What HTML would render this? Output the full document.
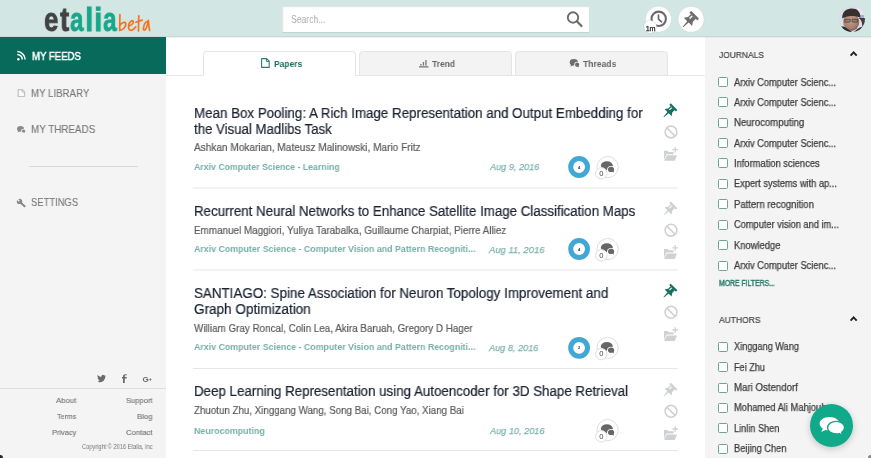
<!DOCTYPE html>
<html><head><meta charset="utf-8">
<style>
*{margin:0;padding:0;box-sizing:border-box}
html,body{width:871px;height:458px;overflow:hidden;background:#fff;font-family:"Liberation Sans",sans-serif}
.t{position:absolute;white-space:nowrap;transform-origin:0 0;will-change:transform}
.a{position:absolute}
.cb{position:absolute;left:718px;width:10px;height:10px;border:1.3px solid #6fa398;border-radius:1.5px;background:#fff}
</style></head><body>
<!-- header -->
<div class="a" style="left:0;top:0;width:871px;height:37px;background:#d2e6e3"></div>
<div class="a" style="left:0;top:36px;width:871px;height:1px;background:#c9d7d5"></div>
<!-- logo -->
<div class="t" style="left:43.97px;top:1.84px;font-size:34.0px;line-height:34.0px;font-weight:bold;color:#424242;-webkit-text-stroke:0.8px #424242;transform:scaleX(0.760)">e</div>
<div class="t" style="left:59.83px;top:1.84px;font-size:34.0px;line-height:34.0px;font-weight:bold;color:#424242;-webkit-text-stroke:0.8px #424242;transform:scaleX(0.806)">t</div>
<div class="t" style="left:70.47px;top:1.84px;font-size:34.0px;line-height:34.0px;font-weight:bold;color:#1aa68a;-webkit-text-stroke:0.8px #1aa68a;transform:scaleX(0.716)">a</div>
<div class="t" style="left:85.37px;top:1.84px;font-size:34.0px;line-height:34.0px;font-weight:bold;color:#1aa68a;-webkit-text-stroke:0.8px #1aa68a;transform:scaleX(0.893)">l</div>
<div class="t" style="left:93.97px;top:1.84px;font-size:34.0px;line-height:34.0px;font-weight:bold;color:#1aa68a;-webkit-text-stroke:0.8px #1aa68a;transform:scaleX(0.893)">i</div>
<div class="t" style="left:103.16px;top:1.84px;font-size:34.0px;line-height:34.0px;font-weight:bold;color:#1aa68a;-webkit-text-stroke:0.8px #1aa68a;transform:scaleX(0.721)">a</div>
<svg class="a" style="left:117px;top:12px" width="36" height="22" viewBox="0 0 36 22">
<g fill="none" stroke="#f57423" stroke-width="1.7" stroke-linecap="round" stroke-linejoin="round">
<path d="M2.9,2.6 C2.9,8 2.6,14 2.7,18.6 M2.9,13.6 C4.5,10.6 8.2,9.2 8.8,11.4 C9.4,13.8 6.4,18 2.8,18.5"/>
<path d="M11.7,14.2 C13.6,13.4 16.4,11.6 16.3,9.6 C16.1,8 13.4,8.6 12.1,11.6 C11,14 11.4,17.8 13.2,18.3 C15,18.8 17.4,16.6 18.8,14.8"/>
<path d="M21.8,3.8 C21.7,9 21.5,14 21.5,19 M18.9,10.2 C21,9.6 23.2,8.8 25.2,8.1"/>
<path d="M31,9 C28.6,9.6 26.8,13.2 26.4,16.4 C26.2,18 27.2,18.6 28.2,17.6 C29.8,15.8 30.8,12 31.4,8.4 C31.6,11.8 32,15.4 32.6,18.4"/>
</g>
</svg>
<!-- search -->
<div class="a" style="left:282px;top:6px;width:307px;height:26px;background:#fff;box-shadow:inset 1px 1px 1.5px rgba(0,0,0,0.13), 0 1px 0 rgba(0,0,0,0.07)"></div>
<!-- avatar -->
<svg class="a" style="left:839px;top:5.8px" width="26" height="26" viewBox="0 0 26 26">
<defs><clipPath id="av"><circle cx="13" cy="13" r="12.95"/></clipPath>
<radialGradient id="face" cx="0.45" cy="0.4" r="0.65"><stop offset="0" stop-color="#c8a090"/><stop offset="0.7" stop-color="#a47e70"/><stop offset="1" stop-color="#6e5048"/></radialGradient></defs>
<g clip-path="url(#av)">
<rect width="26" height="26" fill="#d8dde6"/>
<rect x="18" y="2" width="8" height="12" fill="#e9e4ec"/>
<rect x="20" y="9" width="5" height="4" fill="#9fb2d6"/>
<path d="M19,12 C22,13 24,17 23,22 L26,26 L26,12 Z" fill="#4a3a36"/>
<ellipse cx="12.2" cy="16" rx="8" ry="9" fill="url(#face)"/>
<path d="M0,26 L0,21 C2,19.5 5,20 8,22.5 C10,24 12,25 13,26 Z" fill="#2e2a2e"/>
<path d="M15,26 C17,24 19,22 22,21 L26,21 L26,26 Z" fill="#35302f"/>
<path d="M3.2,12.6 C3,6 7,2.6 12.6,2.6 C18.4,2.6 21.6,6 21.4,11.6 C18,10 14,9.6 10,10.2 C7.4,10.6 5,11.4 3.2,12.6 Z" fill="#37302f"/>
<path d="M5.6,13.4 L11.2,13.2 L11,16 L6,16.2 Z M13,13.2 L18.8,13.5 L18.4,16.1 L13.2,16 Z" fill="rgba(90,70,60,0.25)" stroke="#4e403c" stroke-width="0.8"/>
</g>
</svg>
<!-- left sidebar -->
<div class="a" style="left:0;top:37px;width:166px;height:421px;background:#f4f4f4"></div>
<div class="a" style="left:0;top:37px;width:166px;height:37px;background:#086a5b"></div>
<div class="a" style="left:29px;top:166px;width:109px;height:1px;background:#d8d8d8"></div>
<div class="a" style="left:0;top:388px;width:166px;height:1px;background:#dedede"></div>
<!-- right sidebar -->
<div class="a" style="left:705px;top:37px;width:166px;height:421px;background:#f4f4f4"></div>
<div class="a" style="left:166px;top:37px;width:705px;height:1px;background:rgba(0,0,0,0.05)"></div>
<div class="cb" style="top:77px"></div><div class="cb" style="top:97px"></div><div class="cb" style="top:118px"></div><div class="cb" style="top:138px"></div><div class="cb" style="top:158px"></div><div class="cb" style="top:179px"></div><div class="cb" style="top:199px"></div><div class="cb" style="top:220px"></div><div class="cb" style="top:240px"></div><div class="cb" style="top:260.6px"></div><div class="cb" style="top:341.90px"></div><div class="cb" style="top:362.28px"></div><div class="cb" style="top:382.66px"></div><div class="cb" style="top:403.04px"></div><div class="cb" style="top:423.42px"></div><div class="cb" style="top:443.80px"></div>
<!-- tabs -->
<div class="a" style="left:166px;top:75px;width:539px;height:1px;background:#e6e8ea"></div>
<div class="a" style="left:203px;top:51px;width:153px;height:25px;border:1px solid #e3e6e8;border-bottom:none;border-radius:4px 4px 0 0;background:#fff"></div>
<div class="a" style="left:359px;top:51px;width:153px;height:25px;border:1px solid #e3e6e8;border-radius:4px 4px 0 0;background:#f3f3f3"></div>
<div class="a" style="left:515px;top:51px;width:153px;height:25px;border:1px solid #e3e6e8;border-radius:4px 4px 0 0;background:#f3f3f3"></div>
<!-- dividers -->
<div class="a" style="left:193px;top:187px;width:485px;height:2px;background:#f2f3f4"></div>
<div class="a" style="left:193px;top:269px;width:485px;height:2px;background:#f2f3f4"></div>
<div class="a" style="left:193px;top:368px;width:485px;height:1px;background:#e6e7ea"></div>
<div class="a" style="left:193px;top:450px;width:485px;height:1px;background:#e6e7ea"></div>
<svg class="a" style="left:0;top:0" width="871" height="458" viewBox="0 0 871 458"><circle cx="573" cy="17.5" r="5.2" fill="none" stroke="#6b6b6b" stroke-width="1.9"/><line x1="576.8" y1="21.3" x2="581.5" y2="26" stroke="#6b6b6b" stroke-width="2.2" stroke-linecap="round"/><circle cx="658.5" cy="19.2" r="12.9" fill="#fff" stroke="rgba(0,0,0,0.07)" stroke-width="0.8"/><circle cx="658.7" cy="18.8" r="7.2" fill="none" stroke="#6a6a6a" stroke-width="2.1"/><path d="M658.5,15 L658.5,19.2 L661.5,21.9" fill="none" stroke="#6a6a6a" stroke-width="1.7" stroke-linecap="round"/><circle cx="650.2" cy="26.7" r="6.5" fill="#fff" stroke="rgba(0,0,0,0.10)" stroke-width="0.9"/><text x="650.5" y="30.6" font-family="Liberation Sans" font-size="7.2" fill="#222" stroke="#222" stroke-width="0.25" text-anchor="middle" letter-spacing="-0.3">1m</text><circle cx="691.1" cy="19.3" r="12.9" fill="#fff" stroke="rgba(0,0,0,0.07)" stroke-width="0.8"/><g transform="translate(688.95,20.85) rotate(45) scale(1.18)" fill="#6d6d6d"><rect x="-4.7" y="-7.3" width="9.4" height="2.1" rx="0.4"/><path d="M-2.9,-5.4 L2.9,-5.4 L2.9,-1.8 L5,1.2 L0.85,1.2 L0.3,7.3 L-0.3,7.3 L-0.85,1.2 L-5,1.2 L-2.9,-1.8 Z"/><rect x="-1.6" y="-4.9" width="1.2" height="3.2" fill="#fff"/></g><circle cx="18.3" cy="59.3" r="1.25" fill="#fff"/><path d="M17.3,54.4 A5,5 0 0 1 22.3,59.4" fill="none" stroke="#fff" stroke-width="1.5"/><path d="M17.3,51.6 A7.9,7.9 0 0 1 25.1,59.4" fill="none" stroke="#fff" stroke-width="1.5"/><path d="M18.2,89.6 L22.3,89.6 L24.5,91.8 L24.5,96.5 L18.2,96.5 Z" fill="#fafafa" stroke="#c2c2c2" stroke-width="1.2" stroke-linejoin="round"/><path d="M22.1,89.6 L22.1,92 L24.5,92" fill="none" stroke="#c2c2c2" stroke-width="1"/><ellipse cx="20.50" cy="128.75" rx="3.50" ry="2.85" fill="#8a8a8a"/><path d="M18.23,130.46 L17.70,132.60 L20.15,131.17 Z" fill="#8a8a8a"/><ellipse cx="23.55" cy="130.90" rx="2.45" ry="2.20" fill="#f4f4f4"/><ellipse cx="23.55" cy="130.90" rx="1.75" ry="1.50" fill="#8a8a8a"/><path d="M24.34,131.95 L25.12,132.93 L24.95,131.20 Z" fill="#8a8a8a"/><line x1="20.2" y1="202.2" x2="24.6" y2="206.3" stroke="#888" stroke-width="2" stroke-linecap="round"/><circle cx="19.5" cy="201.4" r="2.7" fill="#888"/><rect x="-0.75" y="-4" width="1.5" height="4.2" fill="#f4f4f4" transform="translate(19.1,201) rotate(-45)"/><path d="M261.6,58.6 L266.6,58.6 L269.2,61.2 L269.2,67.4 L261.6,67.4 Z" fill="#fff" stroke="#2d7d6f" stroke-width="1.1" stroke-linejoin="round"/><path d="M266.4,58.6 L266.4,61.4 L269.2,61.4" fill="none" stroke="#2d7d6f" stroke-width="1"/><rect x="419" y="66.2" width="9.5" height="1.3" fill="#777"/><rect x="420.3" y="64" width="1.3" height="1.6" fill="#777"/><rect x="422.8" y="62" width="1.3" height="3.6" fill="#777"/><rect x="425.3" y="60" width="1.3" height="5.6" fill="#777"/><ellipse cx="573.80" cy="62.20" rx="4.10" ry="3.30" fill="#6d6d6d"/><path d="M571.13,64.18 L570.52,66.66 L573.39,65.01 Z" fill="#6d6d6d"/><ellipse cx="577.10" cy="64.75" rx="2.90" ry="2.95" fill="#f3f3f3"/><ellipse cx="577.10" cy="64.75" rx="2.10" ry="2.15" fill="#6d6d6d"/><path d="M578.05,66.25 L578.99,67.65 L578.78,65.18 Z" fill="#6d6d6d"/><circle cx="579.1" cy="167.00" r="8.4" fill="#fff" stroke="#41a8d5" stroke-width="5"/><text x="579.1" y="168.60" font-family="Liberation Sans" font-size="4" font-weight="bold" fill="#333" text-anchor="middle">4</text><circle cx="607.6" cy="167.10" r="10.6" fill="#fff" stroke="#dedede" stroke-width="1"/><ellipse cx="606.85" cy="165.60" rx="5.95" ry="4.40" fill="#666666"/><path d="M602.98,168.24 L602.09,171.54 L606.25,169.34 Z" fill="#666666"/><ellipse cx="611.05" cy="169.40" rx="3.95" ry="3.50" fill="#fff"/><ellipse cx="611.05" cy="169.40" rx="3.05" ry="2.60" fill="#666666"/><path d="M612.42,171.22 L613.80,172.91 L613.49,169.92 Z" fill="#666666"/><circle cx="601.3" cy="173.30" r="5.7" fill="#fff" stroke="#dedede" stroke-width="1"/><text x="601.4" y="175.60" font-family="Liberation Sans" font-size="7.6" fill="#444" text-anchor="middle">0</text><g transform="translate(668.90,111.80) rotate(45) scale(1.0)" fill="#17705f"><rect x="-4.7" y="-7.3" width="9.4" height="2.1" rx="0.4"/><path d="M-2.9,-5.4 L2.9,-5.4 L2.9,-1.8 L5,1.2 L0.85,1.2 L0.3,7.3 L-0.3,7.3 L-0.85,1.2 L-5,1.2 L-2.9,-1.8 Z"/><rect x="-1.6" y="-4.9" width="1.2" height="3.2" fill="#fff"/></g><circle cx="671" cy="132.00" r="5.9" fill="none" stroke="#cfd1d3" stroke-width="1.6"/><line x1="666.9" y1="127.90" x2="675.1" y2="136.10" stroke="#cfd1d3" stroke-width="1.6"/><path d="M664,150.70 L667.6,150.70 L668.8,152.00 L673.6,152.00 L673.6,154.30 L666.4,154.30 L664,159.90 Z" fill="#cfd1d3"/><path d="M666.8,155.30 L677,155.30 L674.8,160.70 L664.2,160.70 Z" fill="#cfd1d3"/><path d="M675.2,146.90 L675.2,152.50 M672.4,149.70 L678,149.70" stroke="#cfd1d3" stroke-width="1.3"/><circle cx="579.1" cy="249.00" r="8.4" fill="#fff" stroke="#41a8d5" stroke-width="5"/><text x="579.1" y="250.60" font-family="Liberation Sans" font-size="4" font-weight="bold" fill="#333" text-anchor="middle">4</text><circle cx="607.6" cy="249.10" r="10.6" fill="#fff" stroke="#dedede" stroke-width="1"/><ellipse cx="606.85" cy="247.60" rx="5.95" ry="4.40" fill="#666666"/><path d="M602.98,250.24 L602.09,253.54 L606.25,251.34 Z" fill="#666666"/><ellipse cx="611.05" cy="251.40" rx="3.95" ry="3.50" fill="#fff"/><ellipse cx="611.05" cy="251.40" rx="3.05" ry="2.60" fill="#666666"/><path d="M612.42,253.22 L613.80,254.91 L613.49,251.92 Z" fill="#666666"/><circle cx="601.3" cy="255.30" r="5.7" fill="#fff" stroke="#dedede" stroke-width="1"/><text x="601.4" y="257.60" font-family="Liberation Sans" font-size="7.6" fill="#444" text-anchor="middle">0</text><g transform="translate(668.90,210.00) rotate(45) scale(1.0)" fill="#cdd0d2"><rect x="-4.7" y="-7.3" width="9.4" height="2.1" rx="0.4"/><path d="M-2.9,-5.4 L2.9,-5.4 L2.9,-1.8 L5,1.2 L0.85,1.2 L0.3,7.3 L-0.3,7.3 L-0.85,1.2 L-5,1.2 L-2.9,-1.8 Z"/><rect x="-1.6" y="-4.9" width="1.2" height="3.2" fill="#fff"/></g><circle cx="671" cy="230.20" r="5.9" fill="none" stroke="#cfd1d3" stroke-width="1.6"/><line x1="666.9" y1="226.10" x2="675.1" y2="234.30" stroke="#cfd1d3" stroke-width="1.6"/><path d="M664,248.90 L667.6,248.90 L668.8,250.20 L673.6,250.20 L673.6,252.50 L666.4,252.50 L664,258.10 Z" fill="#cfd1d3"/><path d="M666.8,253.50 L677,253.50 L674.8,258.90 L664.2,258.90 Z" fill="#cfd1d3"/><path d="M675.2,245.10 L675.2,250.70 M672.4,247.90 L678,247.90" stroke="#cfd1d3" stroke-width="1.3"/><circle cx="579.1" cy="347.80" r="8.4" fill="#fff" stroke="#41a8d5" stroke-width="5"/><text x="579.1" y="349.40" font-family="Liberation Sans" font-size="4" font-weight="bold" fill="#333" text-anchor="middle">2</text><circle cx="607.6" cy="347.90" r="10.6" fill="#fff" stroke="#dedede" stroke-width="1"/><ellipse cx="606.85" cy="346.40" rx="5.95" ry="4.40" fill="#666666"/><path d="M602.98,349.04 L602.09,352.34 L606.25,350.14 Z" fill="#666666"/><ellipse cx="611.05" cy="350.20" rx="3.95" ry="3.50" fill="#fff"/><ellipse cx="611.05" cy="350.20" rx="3.05" ry="2.60" fill="#666666"/><path d="M612.42,352.02 L613.80,353.71 L613.49,350.72 Z" fill="#666666"/><circle cx="601.3" cy="354.10" r="5.7" fill="#fff" stroke="#dedede" stroke-width="1"/><text x="601.4" y="356.40" font-family="Liberation Sans" font-size="7.6" fill="#444" text-anchor="middle">0</text><g transform="translate(668.90,292.10) rotate(45) scale(1.0)" fill="#17705f"><rect x="-4.7" y="-7.3" width="9.4" height="2.1" rx="0.4"/><path d="M-2.9,-5.4 L2.9,-5.4 L2.9,-1.8 L5,1.2 L0.85,1.2 L0.3,7.3 L-0.3,7.3 L-0.85,1.2 L-5,1.2 L-2.9,-1.8 Z"/><rect x="-1.6" y="-4.9" width="1.2" height="3.2" fill="#fff"/></g><circle cx="671" cy="312.30" r="5.9" fill="none" stroke="#cfd1d3" stroke-width="1.6"/><line x1="666.9" y1="308.20" x2="675.1" y2="316.40" stroke="#cfd1d3" stroke-width="1.6"/><path d="M664,331.00 L667.6,331.00 L668.8,332.30 L673.6,332.30 L673.6,334.60 L666.4,334.60 L664,340.20 Z" fill="#cfd1d3"/><path d="M666.8,335.60 L677,335.60 L674.8,341.00 L664.2,341.00 Z" fill="#cfd1d3"/><path d="M675.2,327.20 L675.2,332.80 M672.4,330.00 L678,330.00" stroke="#cfd1d3" stroke-width="1.3"/><circle cx="607.6" cy="430.10" r="10.6" fill="#fff" stroke="#dedede" stroke-width="1"/><ellipse cx="606.85" cy="428.60" rx="5.95" ry="4.40" fill="#666666"/><path d="M602.98,431.24 L602.09,434.54 L606.25,432.34 Z" fill="#666666"/><ellipse cx="611.05" cy="432.40" rx="3.95" ry="3.50" fill="#fff"/><ellipse cx="611.05" cy="432.40" rx="3.05" ry="2.60" fill="#666666"/><path d="M612.42,434.22 L613.80,435.91 L613.49,432.92 Z" fill="#666666"/><circle cx="601.3" cy="436.30" r="5.7" fill="#fff" stroke="#dedede" stroke-width="1"/><text x="601.4" y="438.60" font-family="Liberation Sans" font-size="7.6" fill="#444" text-anchor="middle">0</text><g transform="translate(668.90,391.10) rotate(45) scale(1.0)" fill="#cdd0d2"><rect x="-4.7" y="-7.3" width="9.4" height="2.1" rx="0.4"/><path d="M-2.9,-5.4 L2.9,-5.4 L2.9,-1.8 L5,1.2 L0.85,1.2 L0.3,7.3 L-0.3,7.3 L-0.85,1.2 L-5,1.2 L-2.9,-1.8 Z"/><rect x="-1.6" y="-4.9" width="1.2" height="3.2" fill="#fff"/></g><circle cx="671" cy="411.30" r="5.9" fill="none" stroke="#cfd1d3" stroke-width="1.6"/><line x1="666.9" y1="407.20" x2="675.1" y2="415.40" stroke="#cfd1d3" stroke-width="1.6"/><path d="M664,430.00 L667.6,430.00 L668.8,431.30 L673.6,431.30 L673.6,433.60 L666.4,433.60 L664,439.20 Z" fill="#cfd1d3"/><path d="M666.8,434.60 L677,434.60 L674.8,440.00 L664.2,440.00 Z" fill="#cfd1d3"/><path d="M675.2,426.20 L675.2,431.80 M672.4,429.00 L678,429.00" stroke="#cfd1d3" stroke-width="1.3"/><path d="M850.6,55.6 L853.6,52.3 L856.7,55.6" fill="none" stroke="#222" stroke-width="1.9"/><path d="M850.6,320.6 L853.6,317.3 L856.7,320.6" fill="none" stroke="#222" stroke-width="1.9"/></svg>
<!-- social -->
<svg class="a" style="left:90px;top:370px" width="70" height="18" viewBox="0 0 70 18">
<path d="M15.8,5.6 C15.2,5.9 14.7,6 14.1,6.1 C14.7,5.7 15.2,5.1 15.4,4.5 C14.8,4.8 14.2,5.1 13.5,5.2 C12.3,3.9 10.2,4.2 9.4,5.7 C9.1,6.3 9,7 9.2,7.7 C6.9,7.6 4.8,6.5 3.3,4.8 C2.5,6.2 3,7.9 4.3,8.8 C3.8,8.8 3.4,8.7 3,8.5 C3,9.9 4,11.1 5.4,11.4 C5,11.5 4.5,11.5 4.1,11.4 C4.5,12.6 5.6,13.4 6.8,13.4 C5.5,14.4 3.9,14.9 2.2,14.7 L2.2,14.7 C3.6,15.6 5.2,16.1 6.8,16.1 C12.2,16.1 15.2,11.6 15.2,7.5 L15.2,7.1 C15.8,6.7 16.3,6.2 16.6,5.6 Z" fill="#6a6a6a" transform="translate(5.6,2.1) scale(0.63)"/>
<path d="M34.8,13 L34.8,8.6 L36.6,8.6 L36.8,7.1 L34.8,7.1 L34.8,6.2 C34.8,5.6 35,5.3 35.8,5.3 L36.9,5.3 L36.9,4.4 C36.5,4.3 35.9,4.3 35.4,4.3 C33.9,4.3 33,5.1 33,6.5 L33,7.1 L32,7.1 L32,8.6 L33,8.6 L33,13 Z" fill="#6a6a6a"/>
<text x="52.6" y="11.8" font-family="Liberation Sans" font-size="8" font-weight="bold" fill="#6a6a6a">G</text>
<text x="58.6" y="10.6" font-family="Liberation Sans" font-size="6" font-weight="bold" fill="#6a6a6a">+</text>
</svg>
<div class="t" style="left:31.80px;top:50.93px;font-size:11px;line-height:11px;color:#ffffff;transform:scaleX(0.8709);-webkit-text-stroke:0.5px #ffffff;">MY FEEDS</div>
<div class="t" style="left:31.40px;top:87.78px;font-size:11px;line-height:11px;color:#777777;transform:scaleX(0.8802);-webkit-text-stroke:0.12px #777777;">MY LIBRARY</div>
<div class="t" style="left:31.40px;top:124.18px;font-size:11px;line-height:11px;color:#777777;transform:scaleX(0.8951);-webkit-text-stroke:0.12px #777777;">MY THREADS</div>
<div class="t" style="left:31.40px;top:197.33px;font-size:11px;line-height:11px;color:#777777;transform:scaleX(0.8563);-webkit-text-stroke:0.12px #777777;">SETTINGS</div>
<div class="t" style="left:56.00px;top:396.10px;font-size:8px;line-height:8px;color:#777777;transform:scaleX(0.9710);-webkit-text-stroke:0.15px #777777;margin-top:0.6px;">About</div>
<div class="t" style="left:126.00px;top:396.10px;font-size:8px;line-height:8px;color:#777777;transform:scaleX(0.9457);-webkit-text-stroke:0.15px #777777;margin-top:0.6px;">Support</div>
<div class="t" style="left:57.00px;top:412.05px;font-size:8px;line-height:8px;color:#777777;transform:scaleX(0.8862);-webkit-text-stroke:0.15px #777777;margin-top:0.6px;">Terms</div>
<div class="t" style="left:137.00px;top:412.05px;font-size:8px;line-height:8px;color:#777777;transform:scaleX(0.9680);-webkit-text-stroke:0.15px #777777;margin-top:0.6px;">Blog</div>
<div class="t" style="left:52.00px;top:428.45px;font-size:8px;line-height:8px;color:#777777;transform:scaleX(0.9265);-webkit-text-stroke:0.15px #777777;margin-top:0.6px;">Privacy</div>
<div class="t" style="left:126.00px;top:428.45px;font-size:8px;line-height:8px;color:#777777;transform:scaleX(0.9612);-webkit-text-stroke:0.15px #777777;margin-top:0.6px;">Contact</div>
<div class="t" style="left:82.00px;top:444.18px;font-size:6.5px;line-height:6.5px;color:#777777;transform:scaleX(0.8701);">Copyright © 2016 Etalia, Inc</div>
<div class="t" style="left:273.80px;top:58.96px;font-size:9.5px;line-height:9.5px;color:#17705f;transform:scaleX(0.8899);font-weight:bold;">Papers</div>
<div class="t" style="left:432.00px;top:59.16px;font-size:9.5px;line-height:9.5px;color:#666666;transform:scaleX(0.8892);font-weight:bold;">Trend</div>
<div class="t" style="left:582.90px;top:59.16px;font-size:9.5px;line-height:9.5px;color:#666666;transform:scaleX(0.9037);font-weight:bold;">Threads</div>
<div class="t" style="left:291.10px;top:13.98px;font-size:10.5px;line-height:10.5px;color:#aaaaaa;transform:scaleX(0.8186);">Search...</div>
<div class="t" style="left:194.00px;top:105.52px;font-size:14px;line-height:14px;color:#1d2333;transform:scaleX(0.9529);-webkit-text-stroke:0.22px #1d2333;">Mean Box Pooling: A Rich Image Representation and Output Embedding for</div>
<div class="t" style="left:194.00px;top:121.52px;font-size:14px;line-height:14px;color:#1d2333;transform:scaleX(0.9452);-webkit-text-stroke:0.22px #1d2333;">the Visual Madlibs Task</div>
<div class="t" style="left:194.00px;top:142.33px;font-size:11px;line-height:11px;color:#5c5c5c;transform:scaleX(0.9153);-webkit-text-stroke:0.22px #5c5c5c;">Ashkan Mokarian, Mateusz Malinowski, Mario Fritz</div>
<div class="t" style="left:194.00px;top:162.06px;font-size:9.5px;line-height:9.5px;color:#74b0a5;transform:scaleX(0.9200);font-weight:bold;">Arxiv Computer Science - Learning</div>
<div class="t" style="left:489.60px;top:162.22px;font-size:9.7px;line-height:9.7px;color:#7cb4aa;transform:scaleX(0.9442);font-style:italic;-webkit-text-stroke:0.25px #7cb4aa;">Aug 9, 2016</div>
<div class="t" style="left:194.00px;top:203.67px;font-size:14px;line-height:14px;color:#1d2333;transform:scaleX(0.9499);-webkit-text-stroke:0.22px #1d2333;">Recurrent Neural Networks to Enhance Satellite Image Classification Maps</div>
<div class="t" style="left:194.00px;top:224.73px;font-size:11px;line-height:11px;color:#5c5c5c;transform:scaleX(0.8971);-webkit-text-stroke:0.22px #5c5c5c;">Emmanuel Maggiori, Yuliya Tarabalka, Guillaume Charpiat, Pierre Alliez</div>
<div class="t" style="left:194.00px;top:244.46px;font-size:9.5px;line-height:9.5px;color:#74b0a5;transform:scaleX(0.9292);font-weight:bold;">Arxiv Computer Science - Computer Vision and Pattern Recogniti...</div>
<div class="t" style="left:489.40px;top:244.87px;font-size:9.7px;line-height:9.7px;color:#7cb4aa;transform:scaleX(0.9738);font-style:italic;-webkit-text-stroke:0.25px #7cb4aa;">Aug 11, 2016</div>
<div class="t" style="left:194.00px;top:285.92px;font-size:14px;line-height:14px;color:#1d2333;transform:scaleX(0.9564);-webkit-text-stroke:0.22px #1d2333;">SANTIAGO: Spine Association for Neuron Topology Improvement and</div>
<div class="t" style="left:194.00px;top:302.07px;font-size:14px;line-height:14px;color:#1d2333;transform:scaleX(0.9684);-webkit-text-stroke:0.22px #1d2333;">Graph Optimization</div>
<div class="t" style="left:194.00px;top:322.88px;font-size:11px;line-height:11px;color:#5c5c5c;transform:scaleX(0.8950);-webkit-text-stroke:0.22px #5c5c5c;">William Gray Roncal, Colin Lea, Akira Baruah, Gregory D Hager</div>
<div class="t" style="left:194.00px;top:342.41px;font-size:9.5px;line-height:9.5px;color:#74b0a5;transform:scaleX(0.9292);font-weight:bold;">Arxiv Computer Science - Computer Vision and Pattern Recogniti...</div>
<div class="t" style="left:489.40px;top:342.82px;font-size:9.7px;line-height:9.7px;color:#7cb4aa;transform:scaleX(0.9442);font-style:italic;-webkit-text-stroke:0.25px #7cb4aa;">Aug 8, 2016</div>
<div class="t" style="left:194.00px;top:384.17px;font-size:14px;line-height:14px;color:#1d2333;transform:scaleX(0.9516);-webkit-text-stroke:0.22px #1d2333;">Deep Learning Representation using Autoencoder for 3D Shape Retrieval</div>
<div class="t" style="left:194.00px;top:405.38px;font-size:11px;line-height:11px;color:#5c5c5c;transform:scaleX(0.8865);-webkit-text-stroke:0.22px #5c5c5c;">Zhuotun Zhu, Xinggang Wang, Song Bai, Cong Yao, Xiang Bai</div>
<div class="t" style="left:194.00px;top:425.51px;font-size:9.5px;line-height:9.5px;color:#74b0a5;transform:scaleX(0.9303);font-weight:bold;">Neurocomputing</div>
<div class="t" style="left:490.20px;top:425.92px;font-size:9.7px;line-height:9.7px;color:#7cb4aa;transform:scaleX(0.9461);font-style:italic;-webkit-text-stroke:0.25px #7cb4aa;">Aug 10, 2016</div>
<div class="t" style="left:718.50px;top:50.91px;font-size:9px;line-height:9px;color:#444444;transform:scaleX(0.9352);-webkit-text-stroke:0.2px #444444;">JOURNALS</div>
<div class="t" style="left:733.60px;top:77.52px;font-size:10px;line-height:10px;color:#3c3c3c;transform:scaleX(0.9270);-webkit-text-stroke:0.25px #3c3c3c;">Arxiv Computer Scienc...</div>
<div class="t" style="left:733.60px;top:97.90px;font-size:10px;line-height:10px;color:#3c3c3c;transform:scaleX(0.9270);-webkit-text-stroke:0.25px #3c3c3c;">Arxiv Computer Scienc...</div>
<div class="t" style="left:733.60px;top:118.28px;font-size:10px;line-height:10px;color:#3c3c3c;transform:scaleX(0.9581);-webkit-text-stroke:0.25px #3c3c3c;">Neurocomputing</div>
<div class="t" style="left:733.60px;top:138.66px;font-size:10px;line-height:10px;color:#3c3c3c;transform:scaleX(0.9270);-webkit-text-stroke:0.25px #3c3c3c;">Arxiv Computer Scienc...</div>
<div class="t" style="left:733.60px;top:159.04px;font-size:10px;line-height:10px;color:#3c3c3c;transform:scaleX(0.9334);-webkit-text-stroke:0.25px #3c3c3c;">Information sciences</div>
<div class="t" style="left:733.60px;top:179.42px;font-size:10px;line-height:10px;color:#3c3c3c;transform:scaleX(0.9258);-webkit-text-stroke:0.25px #3c3c3c;">Expert systems with ap...</div>
<div class="t" style="left:733.60px;top:199.80px;font-size:10px;line-height:10px;color:#3c3c3c;transform:scaleX(0.9518);-webkit-text-stroke:0.25px #3c3c3c;">Pattern recognition</div>
<div class="t" style="left:733.60px;top:220.18px;font-size:10px;line-height:10px;color:#3c3c3c;transform:scaleX(0.9252);-webkit-text-stroke:0.25px #3c3c3c;">Computer vision and im...</div>
<div class="t" style="left:733.60px;top:240.56px;font-size:10px;line-height:10px;color:#3c3c3c;transform:scaleX(0.9377);-webkit-text-stroke:0.25px #3c3c3c;">Knowledge</div>
<div class="t" style="left:733.60px;top:260.94px;font-size:10px;line-height:10px;color:#3c3c3c;transform:scaleX(0.9270);-webkit-text-stroke:0.25px #3c3c3c;">Arxiv Computer Scienc...</div>
<div class="t" style="left:718.80px;top:278.65px;font-size:8.3px;line-height:8.3px;color:#2b7b6d;transform:scaleX(0.8265);-webkit-text-stroke:0.45px #2b7b6d;">MORE FILTERS...</div>
<div class="t" style="left:718.50px;top:315.71px;font-size:9px;line-height:9px;color:#444444;transform:scaleX(0.9431);-webkit-text-stroke:0.2px #444444;">AUTHORS</div>
<div class="t" style="left:733.60px;top:342.32px;font-size:10px;line-height:10px;color:#3c3c3c;transform:scaleX(0.9168);-webkit-text-stroke:0.25px #3c3c3c;">Xinggang Wang</div>
<div class="t" style="left:733.60px;top:362.70px;font-size:10px;line-height:10px;color:#3c3c3c;transform:scaleX(0.9114);-webkit-text-stroke:0.25px #3c3c3c;">Fei Zhu</div>
<div class="t" style="left:733.60px;top:383.08px;font-size:10px;line-height:10px;color:#3c3c3c;transform:scaleX(0.9662);-webkit-text-stroke:0.25px #3c3c3c;">Mari Ostendorf</div>
<div class="t" style="left:733.60px;top:403.46px;font-size:10px;line-height:10px;color:#3c3c3c;transform:scaleX(0.9338);-webkit-text-stroke:0.25px #3c3c3c;">Mohamed Ali Mahjoub</div>
<div class="t" style="left:733.60px;top:423.84px;font-size:10px;line-height:10px;color:#3c3c3c;transform:scaleX(0.9175);-webkit-text-stroke:0.25px #3c3c3c;">Linlin Shen</div>
<div class="t" style="left:733.60px;top:444.22px;font-size:10px;line-height:10px;color:#3c3c3c;transform:scaleX(0.9241);-webkit-text-stroke:0.25px #3c3c3c;">Beijing Chen</div>
<!-- FAB -->
<div class="a" style="left:809.5px;top:403.8px;width:43.6px;height:43.6px;border-radius:50%;background:#10a98a;box-shadow:0 2px 7px rgba(0,0,0,0.2)"></div>
<svg class="a" style="left:809.5px;top:403.8px" width="44" height="44" viewBox="0 0 44 44">
<path d="M19.5,13 C14,13 9.6,15.9 9.6,19.6 C9.6,21.6 10.9,23.4 12.8,24.6 L11.2,28 L15.6,25.9 C16.8,26.2 18.1,26.3 19.5,26.3 C25,26.3 29.4,23.3 29.4,19.6 C29.4,15.9 25,13 19.5,13 Z" fill="#fff"/>
<path d="M26.2,17.4 C21.6,17.4 17.6,20 17.6,23.6 C17.6,27.2 21.4,30 26.2,30 C27.2,30 28.2,29.9 29.1,29.6 L32.8,31.3 L31.6,28.3 C33.3,27.2 34.6,25.5 34.6,23.6 C34.6,20 30.8,17.4 26.2,17.4 Z" fill="#fff" stroke="#10a98a" stroke-width="1.4"/>
</svg>
<!-- corners -->
<div class="a" style="left:-2px;top:454.5px;width:4.5px;height:5px;border-radius:50%;background:#2a2530"></div>
<div class="a" style="left:868px;top:455px;width:5px;height:5px;border-radius:50%;background:#8a8a8a"></div>
</body></html>
